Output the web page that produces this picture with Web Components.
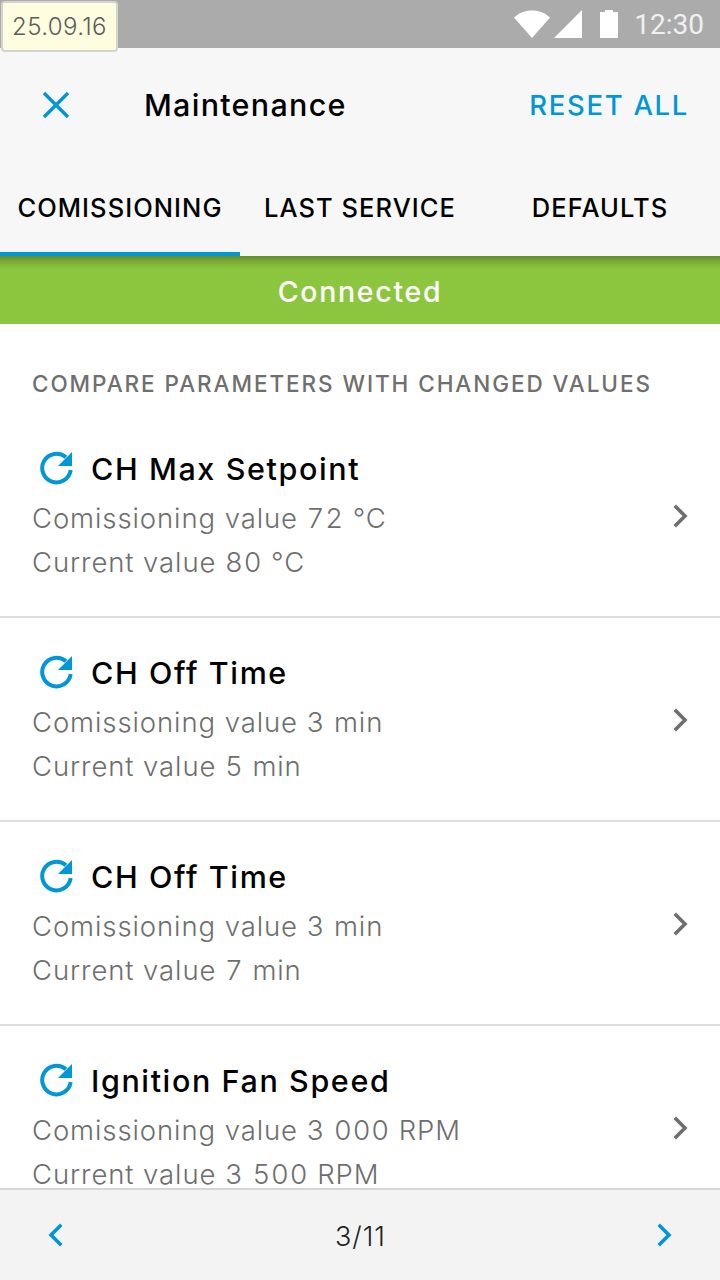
<!DOCTYPE html>
<html><head><meta charset="utf-8"><style>
html,body{margin:0;padding:0;background:#fff}
body{width:720px;height:1280px;overflow:hidden;font-family:Inter,"Liberation Sans",sans-serif}
</style></head><body>
<app-screen></app-screen>
<script>
function def(name,css,html,setup){customElements.define(name,class extends HTMLElement{connectedCallback(){if(this.shadowRoot)return;const r=this.attachShadow({mode:'open'});r.innerHTML='<style>'+css+'</style>'+(typeof html==='function'?html(this):html);}});}
const chev=(d,c,cls)=>`<svg class="${cls||''}" width="24" height="32" viewBox="0 0 24 32"><path d="${d}" fill="none" stroke="${c}" stroke-width="3.6" stroke-linecap="square"/></svg>`;
def('status-bar',`
:host{display:flex;align-items:center;justify-content:flex-end;height:48px;background:#ababab;position:relative;color:#f0f0f0;font:28px Roboto,sans-serif;padding-right:16px;box-sizing:border-box}
svg{display:block}
.w{margin-right:3px}.s{margin-right:18px}.b{margin-right:16px}
.date{position:absolute;left:1px;top:1px;width:117px;height:51px;box-sizing:border-box;background:#fffde0;border:2px solid #d4d4cc;border-radius:4px;color:#5c5c5c;font:300 24px Inter,sans-serif;letter-spacing:.4px;display:flex;align-items:center;justify-content:center;z-index:3}
`,`<span class="date">25.09.16</span>
<svg class="w" width="38" height="30" viewBox="0 0 38 30"><path d="M1 8.5C6 4 12 1.500 19 1.500S32 4 37 8.500L19 29z" fill="#fff"/></svg>
<svg class="s" width="28" height="28" viewBox="0 0 28 28"><path d="M0 28L28 0V28z" fill="#fff"/></svg>
<svg class="b" width="18" height="28" viewBox="0 0 18 28"><path d="M5 0h8v2h5v26H0V2h5z" fill="#fff"/></svg>
<span>12:30</span>`);
def('app-bar',`
:host{display:flex;align-items:center;height:113px;background:#f7f7f7;padding:0 31px 0 41px;box-sizing:border-box}
svg{display:block;margin-right:73px}
.t{font:500 30.500px Inter,sans-serif;color:#000;flex:1;letter-spacing:1.27px}
.r{font:500 27.500px Inter,sans-serif;color:#0097d9;letter-spacing:1.67px}
`,`<svg width="30" height="30" viewBox="0 0 30 30"><path d="M3 3L27 27M27 3L3 27" stroke="#0097d9" stroke-width="3.400" fill="none"/></svg><span class="t">Maintenance</span><span class="r">RESET ALL</span>`);
def('tab-bar',`:host{display:flex;height:95px;background:#f7f7f7;position:relative;z-index:2}`,`<slot></slot>`);
def('tab-item',`
:host{display:flex;flex:1;align-items:center;justify-content:center;box-sizing:border-box;height:95px;padding-top:1px;font:500 25.500px Inter,sans-serif;color:#000;white-space:nowrap;border-bottom:4px solid transparent;letter-spacing:1.05px}
:host([active]){border-bottom-color:#0097d9}
`,`<slot></slot>`);
def('conn-banner',`
:host{display:flex;align-items:center;justify-content:center;height:68px;padding-top:2px;box-sizing:border-box;background:linear-gradient(#648a2e 0,#79a836 5px,#8cc63f 13px,#8cc63f 100%);color:#fff;font:500 28.500px Inter,sans-serif;letter-spacing:1.7px}
`,`<slot></slot>`);
def('section-title',`
:host{display:block;padding:47px 0 0 32px;height:90px;box-sizing:border-box;font:500 22.500px Inter,sans-serif;color:#6f6f6f;letter-spacing:1.93px;white-space:nowrap;line-height:26px}
`,`<slot></slot>`);
def('param-row',`
:host{display:grid;grid-template-columns:59px 1fr 24px;align-items:center;height:204px;box-sizing:border-box;padding:28px 27px 0 32px;border-bottom:2px solid #dedede;align-content:start;position:relative}
.i{display:block;margin-left:6px}
.n{font:500 30.500px Inter,sans-serif;color:#000;line-height:54px;letter-spacing:1.6px}
.d{grid-column:1 / 3;font:300 27.500px Inter,sans-serif;color:#6e6e6e;line-height:44px;letter-spacing:.9px;word-spacing:.4px;white-space:nowrap;font-variant-numeric:tabular-nums}
.c{grid-column:3;grid-row:2 / 4;align-self:start;margin-top:4px}
`,e=>`<svg class="i" width="36" height="36" viewBox="0 0 36 36"><path d="M28 6.300A14.300 14.300 0 1 0 32.700 19" fill="none" stroke="#0097d9" stroke-width="4"/><path d="M34 1V15H20z" fill="#0097d9"/></svg>
<span class="n">${e.getAttribute('name')}</span>
<span class="d">Comissioning value ${e.getAttribute('was')}</span>
${chev('M7 7L16 16L7 25','#6f6f6f','c')}
<span class="d">Current value ${e.getAttribute('now')}</span>`);
def('param-list',`:host{display:block;flex:1;min-height:0;overflow:hidden;background:#fff}`,`<slot></slot>`);
def('pager-bar',`
:host{display:flex;align-items:center;justify-content:space-between;height:92px;box-sizing:border-box;background:#f3f3f3;border-top:2px solid #d6d6d6;padding:0 43px 0 44px;color:#222;font:300 27px Inter,sans-serif;letter-spacing:1px}
svg{display:block}
span{padding-top:2px}
`,`${chev('M16 7L7 16L16 25','#0097d9')}<span>3/11</span>${chev('M7 7L16 16L7 25','#0097d9')}`);
def('app-screen',`:host{display:flex;flex-direction:column;width:720px;height:1280px;overflow:hidden}`,`
<status-bar></status-bar><app-bar></app-bar>
<tab-bar><tab-item active>COMISSIONING</tab-item><tab-item>LAST SERVICE</tab-item><tab-item>DEFAULTS</tab-item></tab-bar>
<conn-banner>Connected</conn-banner>
<param-list><section-title>COMPARE PARAMETERS WITH CHANGED VALUES</section-title>
<param-row name="CH Max Setpoint" was="72 °C" now="80 °C"></param-row>
<param-row name="CH Off Time" was="3 min" now="5 min"></param-row>
<param-row name="CH Off Time" was="3 min" now="7 min"></param-row>
<param-row name="Ignition Fan Speed" was="3 000 RPM" now="3 500 RPM"></param-row>
</param-list><pager-bar></pager-bar>`);
</script></body></html>
